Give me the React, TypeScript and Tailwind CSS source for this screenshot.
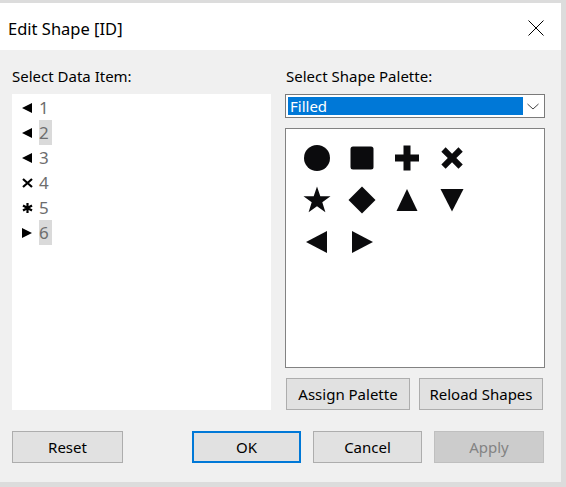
import React from 'react';

const font = { fontFamily: '"Noto Sans", "Open Sans", sans-serif' };

const Marker: React.FC<{ kind: string }> = ({ kind }) => {
  if (kind === 'left')
    return (
      <svg width="11" height="10" viewBox="0 0 11 10">
        <polygon points="0,5 10,0 10,10" fill="#000" />
      </svg>
    );
  if (kind === 'right')
    return (
      <svg width="11" height="10" viewBox="0 0 11 10">
        <polygon points="10,5 0,0 0,10" fill="#000" />
      </svg>
    );
  if (kind === 'x')
    return (
      <svg width="11" height="10" viewBox="0 0 11 10">
        <path d="M1 1 L10 9 M10 1 L1 9" stroke="#000" strokeWidth="2.2" />
      </svg>
    );
  return (
    <svg width="11" height="10" viewBox="0 0 11 10">
      <path d="M5.5 0 V10 M1 2.5 L10 7.5 M10 2.5 L1 7.5" stroke="#000" strokeWidth="2.2" />
    </svg>
  );
};

const items = [
  { n: '1', kind: 'left', sel: false },
  { n: '2', kind: 'left', sel: true },
  { n: '3', kind: 'left', sel: false },
  { n: '4', kind: 'x', sel: false },
  { n: '5', kind: 'star', sel: false },
  { n: '6', kind: 'right', sel: true },
];

const shapes: React.ReactNode[] = [
  <circle cx="15" cy="15" r="13" fill="#0b0b0d" />,
  <rect x="3.5" y="3.5" width="23" height="23" rx="2.5" fill="#0b0b0d" />,
  <path d="M11.5 2.5 H18.5 V11.5 H27 V18.5 H18.5 V27.5 H11.5 V18.5 H3 V11.5 H11.5 Z" fill="#0b0b0d" />,
  <path d="M5 9 L9 5 L15 11 L21 5 L25 9 L19 15 L25 21 L21 25 L15 19 L9 25 L5 21 L11 15 Z" fill="#0b0b0d" transform="translate(-1 -1) scale(1.07)" />,
  <polygon points="15,1.5 18.3,11.2 28.5,11.2 20.3,17.3 23.4,27.2 15,21.2 6.6,27.2 9.7,17.3 1.5,11.2 11.7,11.2" fill="#0b0b0d" />,
  <polygon points="15,1.5 28.5,15 15,28.5 1.5,15" fill="#0b0b0d" />,
  <polygon points="15,4 25.5,26 4.5,26" fill="#0b0b0d" />,
  <polygon points="3.5,4 26.5,4 15,26.5" fill="#0b0b0d" />,
  <polygon points="4,15 25,4 25,26" fill="#0b0b0d" />,
  <polygon points="26,15 5,4 5,26" fill="#0b0b0d" />,
];

const Btn: React.FC<{ label: string; w: string; primary?: boolean; disabled?: boolean }> = ({ label, w, primary, disabled }) => (
  <button
    className={`${w} h-[32px] text-[15px] flex items-center justify-center ${
      disabled
        ? 'bg-[#cccccc] border border-[#bfbfbf] text-[#838383]'
        : primary
        ? 'bg-[#e1e1e1] border-2 border-[#0078d7] text-[#000]'
        : 'bg-[#e1e1e1] border border-[#adadad] text-[#000]'
    }`}
  >
    {label}
  </button>
);

export default function App() {
  return (
    <div className="w-[566px] h-[487px] bg-[#dcdcdc] pt-[3px] pr-[5px] pb-[5px] overflow-hidden" style={font}>
      <div className="w-[561px] h-[479px] flex flex-col bg-[#f0f0f0]">
        {/* title bar */}
        <div className="h-[47px] bg-white flex items-center justify-between pl-[8px] pr-[17px] pt-[6px]">
          <span className="text-[16.5px] text-[#000]">Edit Shape [ID]</span>
          <svg width="16" height="16" viewBox="0 0 16 16" className="-mt-[4px]">
            <path d="M0.5 0.5 L15.5 15.5 M15.5 0.5 L0.5 15.5" stroke="#000" strokeWidth="1" />
          </svg>
        </div>

        {/* body */}
        <div className="flex-1 flex flex-col pt-[12px] pl-[12px] pr-[16px] pb-[19px]">
          <div className="flex gap-[14px]">
            <div className="w-[259px] flex flex-col">
              <div className="h-[28px] flex items-center text-[15px] text-[#000] mb-[4px]">Select Data Item:</div>
              <div className="flex-1 bg-white pt-[1px]">
                {items.map((it) => (
                  <div key={it.n} className="h-[25px] flex items-center">
                    <div className="w-[27px] flex justify-end pr-[6px]">
                      <Marker kind={it.kind} />
                    </div>
                    <span
                      className={`h-[25px] flex items-center text-[17px] text-[#6d6d6d] ${it.sel ? 'bg-[#dadada] pr-[3px]' : ''}`}
                    >
                      {it.n}
                    </span>
                  </div>
                ))}
              </div>
            </div>

            <div className="w-[260px] flex flex-col">
              <div className="h-[28px] flex items-center text-[15px] text-[#000] mb-[4px] pl-[1px]">Select Shape Palette:</div>
              <div className="h-[24px] border border-[#7a7a7a] bg-white flex items-center p-[2px]">
                <div className="flex-1 h-full bg-[#0078d7] text-white text-[15px] leading-[18px] pl-[2px]">Filled</div>
                <svg width="18" height="18" viewBox="0 0 18 18" className="ml-[1px]">
                  <path d="M3.5 7 L9 12 L14.5 7" stroke="#444" strokeWidth="1" fill="none" />
                </svg>
              </div>
              <div className="h-[240px] mt-[10px] border border-[#828282] bg-white pl-[8px] pt-[8px]">
                <div className="grid grid-cols-[repeat(4,45px)] auto-rows-[42px]">
                  {shapes.map((s, i) => (
                    <div key={i} className="flex items-center justify-center">
                      <svg width="30" height="30" viewBox="0 0 30 30">
                        {s}
                      </svg>
                    </div>
                  ))}
                </div>
              </div>
              <div className="flex gap-[9px] mt-[10px] pl-[1px]">
                <Btn label="Assign Palette" w="w-[124px]" />
                <Btn label="Reload Shapes" w="w-[124px]" />
              </div>
            </div>
          </div>

          <div className="flex mt-auto">
            <Btn label="Reset" w="w-[111px]" />
            <div className="flex gap-[12px] ml-[69px]">
              <Btn label="OK" w="w-[109px]" primary />
              <Btn label="Cancel" w="w-[109px]" />
              <Btn label="Apply" w="w-[110px]" disabled />
            </div>
          </div>
        </div>
      </div>
    </div>
  );
}
